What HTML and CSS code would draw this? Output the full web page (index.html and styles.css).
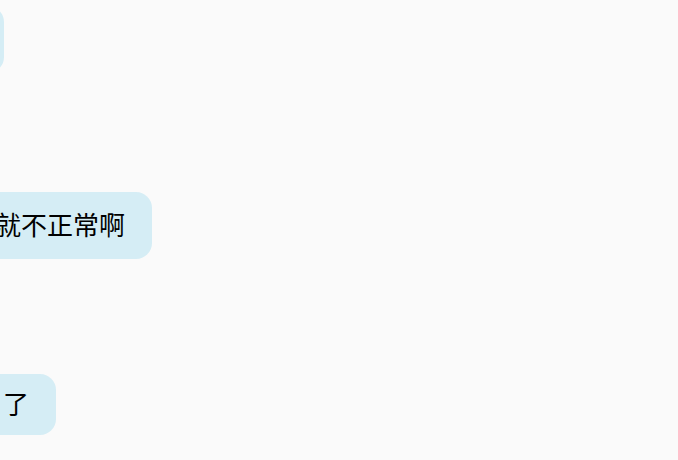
FILE: index.html
```html
<!DOCTYPE html>
<html lang="zh">
<head>
<meta charset="utf-8">
<link rel="stylesheet" href="styles.css">
</head>
<body>
<div class="chat">
  <div class="bubble b1">嗯嗯，好的没问题</div>
  <div class="bubble b2">这样一直这样就不正常啊</div>
  <div class="bubble b3">好吧好吧，了</div>
</div>
</body>
</html>
```
FILE: styles.css
```css
html, body {
  margin: 0;
  padding: 0;
  background: #fafafa;
  width: 678px;
  height: 460px;
  overflow: hidden;
}
.chat {
  display: flex;
  flex-direction: column;
  align-items: flex-start;
  margin-left: -300px;
  padding-top: 6px;
}
.bubble {
  box-sizing: border-box;
  background: #d5edf5;
  border-radius: 16px;
  font-family: "Noto Sans CJK SC", "Noto Sans", sans-serif;
  font-size: 26px;
  line-height: 33px;
  color: #000;
  white-space: nowrap;
  overflow: hidden;
  text-align: right;
  padding: 15px 27px 19px 20px;
}
.b1 { width: 304px; }
.b2 { width: 452px; margin-top: 119px; }
.b3 { width: 356px; margin-top: 115px; padding-top: 12px; padding-bottom: 16px; }
```
